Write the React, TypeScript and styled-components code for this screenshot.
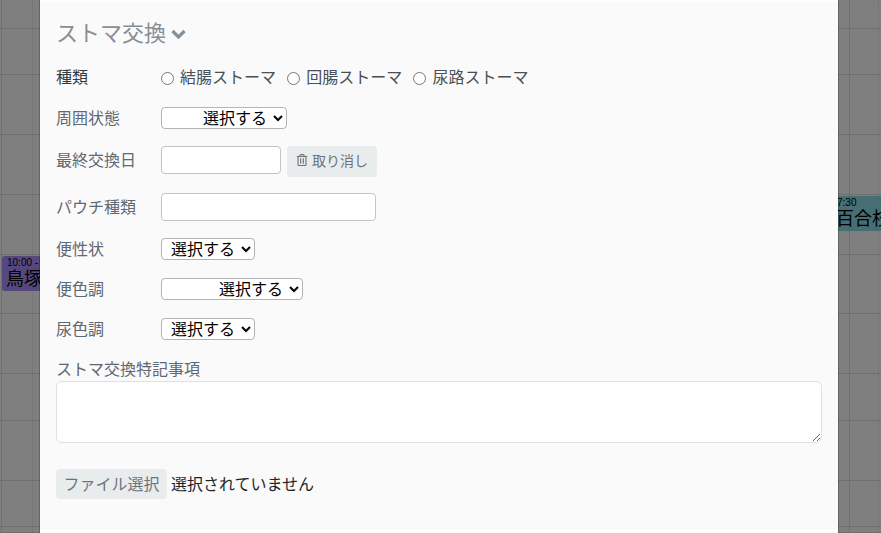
import React from "react";
import styled, { createGlobalStyle } from "styled-components";
import { FaRegTrashAlt } from "react-icons/fa";

const GlobalStyle = createGlobalStyle`
  html, body { margin: 0; padding: 0; height: 100%; overflow: hidden; background: #fff; }
  body { font-family: "Liberation Sans", "Noto Sans CJK JP", sans-serif; font-size: 16px; color: #212529; }
  * { box-sizing: border-box; }
`;

const Page = styled.div`
  position: relative;
  width: 881px;
  height: 533px;
  overflow: hidden;
`;

const Calendar = styled.div`
  display: flex;
  flex-direction: column;
  height: 533px;
`;

const CalendarRow = styled.div<{ $h: number }>`
  display: grid;
  grid-template-columns: 2px 31px 817px 29px 2px;
  height: ${(p) => p.$h}px;
  flex: none;
  border-bottom: 1px solid #dedede;
`;

const CalendarCell = styled.div<{ $line?: "solid" | "dotted" }>`
  border-right: ${(p) => (p.$line ? `1px ${p.$line} #dedede` : "none")};
`;

const CalendarEvent = styled.div<{ $left: number; $top: number; $bg: string }>`
  position: absolute;
  left: ${(p) => p.$left}px;
  top: ${(p) => p.$top}px;
  width: 80px;
  height: 35px;
  padding: 1px 4px;
  border-radius: 3px;
  background: ${(p) => p.$bg};
  color: #000;
  overflow: hidden;
  white-space: nowrap;
`;

const EventTime = styled.div`
  margin-left: 1px;
  font-size: 10px;
  line-height: 11px;
`;

const EventName = styled.div`
  font-size: 18px;
  line-height: 22px;
`;

const Backdrop = styled.div`
  position: absolute;
  inset: 0;
  padding-left: 40px;
  background: rgba(0, 0, 0, 0.5);
`;

const Modal = styled.div`
  width: 798px;
  height: 533px;
  padding-top: 2px;
  background: #fff;
  box-shadow: 0 0 0 1px rgba(0, 0, 0, 0.2);
`;

const Section = styled.section`
  height: 528px;
  padding: 16px 16px 0;
  background: #fafafa;
`;

const Title = styled.h3`
  display: flex;
  align-items: center;
  gap: 5px;
  margin: 0 0 16px;
  font-size: 22px;
  line-height: 32px;
  font-weight: 400;
  color: #868e96;
`;

const Chevron = styled.svg`
  width: 15px;
  height: 11px;
  fill: none;
  stroke: currentColor;
  stroke-width: 3.2;
`;

const Row = styled.div<{ $top?: boolean }>`
  display: flex;
  align-items: ${(p) => (p.$top ? "flex-start" : "center")};
  min-height: 24px;
  margin-bottom: 16px;
`;

const Label = styled.label<{ $dark?: boolean; $tall?: boolean }>`
  flex: none;
  width: 105px;
  margin: ${(p) => (p.$dark ? "0" : "1px 0 -1px")};
  line-height: ${(p) => (p.$tall ? 28 : 24)}px;
  color: ${(p) => (p.$dark ? "#343a40" : "#5f6873")};
`;

const RadioGroup = styled.div`
  display: flex;
  gap: 11.2px;
`;

const RadioLabel = styled.label`
  display: flex;
  align-items: center;
  gap: 6px;
  line-height: 24px;
  color: #495057;
`;

const Radio = styled.input`
  width: 13px;
  height: 13px;
  margin: 0;
`;

const Select = styled.select<{ $w: number; $pad: number }>`
  width: ${(p) => p.$w}px;
  height: 22px;
  padding: 0 0 0 ${(p) => p.$pad}px;
  border: 1px solid #b4b4b4;
  border-radius: 4px;
  background-color: #fff;
  color: #000;
  font: 16px "Liberation Sans", "Noto Sans CJK JP", sans-serif;
`;

const TextInput = styled.input<{ $w: number }>`
  width: ${(p) => p.$w}px;
  height: 28px;
  padding: 0 8px;
  border: 1px solid #c4c4c4;
  border-radius: 4px;
  background: #fff;
`;

const GhostButton = styled.button`
  display: inline-flex;
  align-items: center;
  gap: 4px;
  flex: none;
  height: 31px;
  margin-left: 6px;
  padding: 0 9px 3px;
  border: 0;
  border-radius: 4px;
  background: #e9ecec;
  color: #6c757d;
  font: 14px "Liberation Sans", "Noto Sans CJK JP", sans-serif;
`;

const NoteLabel = styled.label`
  display: block;
  height: 24px;
  line-height: 26px;
  color: #5f6873;
`;

const NoteArea = styled.textarea`
  display: block;
  width: 766px;
  height: 62px;
  padding: 6px 12px;
  border: 1px solid #e0e0e0;
  border-radius: 6px;
  background: #fff;
`;

const FileRow = styled.div`
  display: flex;
  align-items: center;
  gap: 4px;
  margin-top: 26px;
`;

const FileButton = styled.button`
  width: 111px;
  height: 30px;
  padding: 0 0 3px;
  border: 0;
  border-radius: 4px;
  background: #e9ecec;
  color: #6c757d;
  font: 16px "Liberation Sans", "Noto Sans CJK JP", sans-serif;
`;

const FileName = styled.span`
  padding-bottom: 3px;
  color: #212529;
`;

const rowHeights = [29, 46, 60, 60, 60, 59, 60, 47, 60, 46, 6];

export default function App() {
  return (
    <Page>
      <GlobalStyle />
      <Calendar>
        {rowHeights.map((h, i) => (
          <CalendarRow key={i} $h={h}>
            <CalendarCell $line="solid" />
            <CalendarCell $line="dotted" />
            <CalendarCell $line="solid" />
            <CalendarCell $line="dotted" />
            <CalendarCell />
          </CalendarRow>
        ))}
      </Calendar>
      <CalendarEvent $left={2} $top={256} $bg="#ac90ff">
        <EventTime>10:00 - 12:00</EventTime>
        <EventName>鳥塚</EventName>
      </CalendarEvent>
      <CalendarEvent $left={832} $top={196} $bg="#8cdce6">
        <EventTime>7:30</EventTime>
        <EventName>百合枝</EventName>
      </CalendarEvent>
      <Backdrop>
        <Modal>
          <Section>
            <Title>
              ストマ交換
              <Chevron viewBox="0 0 15 11"><polyline points="1.5,2 7.5,8 13.5,2" /></Chevron>
            </Title>
            <Row>
              <Label $dark>種類</Label>
              <RadioGroup>
                <RadioLabel><Radio type="radio" name="kind" />結腸ストーマ</RadioLabel>
                <RadioLabel><Radio type="radio" name="kind" />回腸ストーマ</RadioLabel>
                <RadioLabel><Radio type="radio" name="kind" />尿路ストーマ</RadioLabel>
              </RadioGroup>
            </Row>
            <Row>
              <Label>周囲状態</Label>
              <Select $w={126} $pad={37}><option>選択する</option></Select>
            </Row>
            <Row $top>
              <Label $tall>最終交換日</Label>
              <TextInput $w={120} />
              <GhostButton><FaRegTrashAlt size={12} />取り消し</GhostButton>
            </Row>
            <Row>
              <Label>パウチ種類</Label>
              <TextInput $w={215} />
            </Row>
            <Row>
              <Label>便性状</Label>
              <Select $w={94} $pad={5}><option>選択する</option></Select>
            </Row>
            <Row>
              <Label>便色調</Label>
              <Select $w={142} $pad={53}><option>選択する</option></Select>
            </Row>
            <Row>
              <Label>尿色調</Label>
              <Select $w={94} $pad={5}><option>選択する</option></Select>
            </Row>
            <NoteLabel>ストマ交換特記事項</NoteLabel>
            <NoteArea />
            <FileRow>
              <FileButton>ファイル選択</FileButton>
              <FileName>選択されていません</FileName>
            </FileRow>
          </Section>
        </Modal>
      </Backdrop>
    </Page>
  );
}
